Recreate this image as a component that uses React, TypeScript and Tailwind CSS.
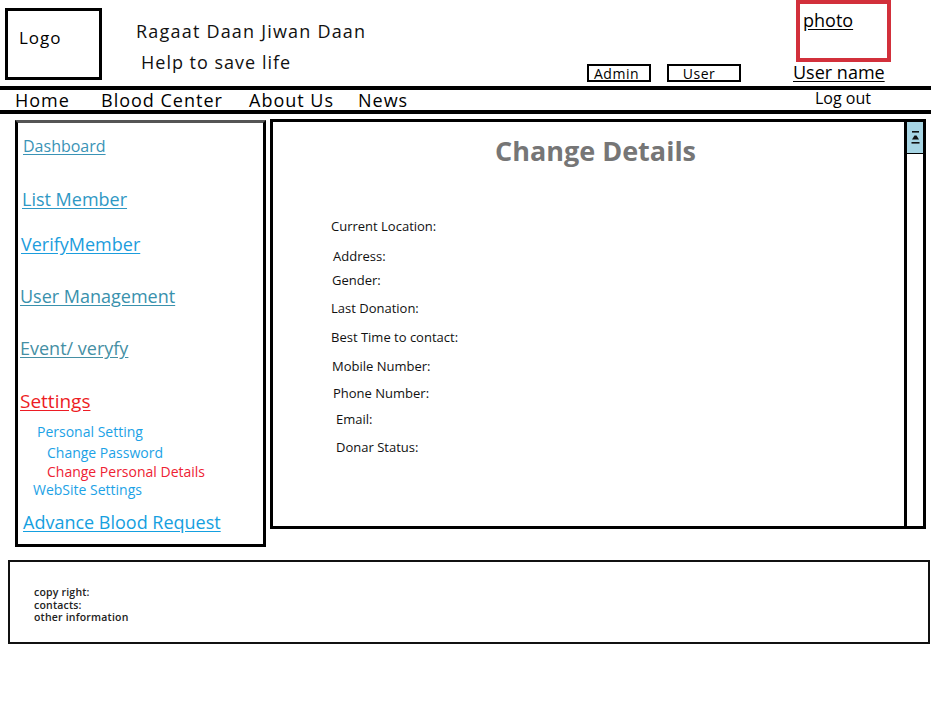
import React from "react";

const sideLinks: { label: string; cls: string }[] = [
  { label: "Dashboard", cls: "mt-[12px] ml-[5px] text-[16px] leading-[22px] text-[#3a93b6]" },
  { label: "List Member", cls: "mt-[30px] ml-[4px] text-[18px] leading-[24px] text-[#2f98c4]" },
  { label: "VerifyMember", cls: "mt-[21px] ml-[3px] text-[18px] leading-[24px] text-[#1b9ddd]" },
  { label: "User Management", cls: "mt-[28px] ml-[2px] text-[18px] leading-[24px] text-[#3991ad]" },
  { label: "Event/ veryfy", cls: "mt-[28px] ml-[2px] text-[18px] leading-[24px] text-[#458fa4]" },
  { label: "Settings", cls: "mt-[28px] ml-[2px] text-[19px] leading-[26px] text-[#ed1c24]" },
];

const subLinks: { label: string; cls: string }[] = [
  { label: "Personal Setting", cls: "mt-[9px] ml-[19px] text-[#1ca2e6]" },
  { label: "Change Password", cls: "mt-[3px] ml-[29px] text-[#1ca2e6]" },
  { label: "Change Personal Details", cls: "mt-[1px] ml-[29px] text-[#ee2233]" },
  { label: "WebSite Settings", cls: "mt-[0px] ml-[15px] text-[#1ca2e6]" },
];

const fields: { label: string; cls: string }[] = [
  { label: "Current Location:", cls: "mt-[0px] ml-[0px]" },
  { label: "Address:", cls: "mt-[12px] ml-[2px]" },
  { label: "Gender:", cls: "mt-[6px] ml-[1px]" },
  { label: "Last Donation:", cls: "mt-[10px] ml-[0px]" },
  { label: "Best Time to contact:", cls: "mt-[11px] ml-[0px]" },
  { label: "Mobile Number:", cls: "mt-[11px] ml-[1px]" },
  { label: "Phone Number:", cls: "mt-[9px] ml-[2px]" },
  { label: "Email:", cls: "mt-[8px] ml-[5px]" },
  { label: "Donar Status:", cls: "mt-[10px] ml-[5px]" },
];

export default function App() {
  return (
    <div
      className="w-[931px] h-[702px] bg-white text-black overflow-hidden"
      style={{ fontFamily: '"Open Sans", "Noto Sans", sans-serif' }}
    >
      {/* Header */}
      <div className="flex items-start h-[86px]">
        <div className="ml-[5px] mt-[8px] w-[97px] h-[72px] border-[3px] border-black shrink-0">
          <div className="mt-[16px] ml-[11px] text-[17px] leading-[22px] tracking-[1px]">Logo</div>
        </div>
        <div className="ml-[34px] w-[451px] shrink-0">
          <div className="mt-[19px] text-[18px] leading-[24px] tracking-[1.2px] text-[#111]">
            Ragaat Daan Jiwan Daan
          </div>
          <div className="mt-[7px] ml-[5px] text-[18px] leading-[24px] tracking-[1px] text-[#111]">
            Help to save life
          </div>
        </div>
        <div className="mt-[64px] w-[64px] h-[18px] border-[2.5px] border-black shrink-0 flex items-center">
          <span className="ml-[5px] text-[14px] leading-[13px] tracking-[0.5px]">Admin</span>
        </div>
        <div className="ml-[16px] mt-[64px] w-[74px] h-[18px] border-[2.5px] border-black shrink-0 flex items-center justify-center">
          <span className="text-[14px] leading-[13px] tracking-[0.5px] -ml-[10px]">User</span>
        </div>
        <div className="ml-[52px] w-[100px] shrink-0">
          <div className="ml-[3px] w-[95px] h-[62px] border-[4px] border-[#d2303b]">
            <div className="mt-[4px] ml-[3px] text-[18px] leading-[24px] underline underline-offset-2">
              photo
            </div>
          </div>
          <div className="text-[18px] leading-[20px] underline underline-offset-2 whitespace-nowrap">
            User name
          </div>
        </div>
      </div>

      {/* Nav bar */}
      <div className="h-[28px] border-t-[4px] border-b-[4px] border-black flex items-center">
        <span className="ml-[15px] w-[86px] text-[18px] leading-[20px] tracking-[1px]">Home</span>
        <span className="w-[148px] text-[18px] leading-[20px] tracking-[1px]">Blood Center</span>
        <span className="w-[109px] text-[18px] leading-[20px] tracking-[1px]">About Us</span>
        <span className="w-[457px] text-[18px] leading-[20px] tracking-[1px]">News</span>
        <span className="text-[16px] leading-[20px] -mt-[4px]">Log out</span>
      </div>

      {/* Body */}
      <div className="flex items-start">
        {/* Sidebar */}
        <div className="ml-[15px] mt-[6px] w-[251px] h-[427px] border-[3px] border-black border-t-[#555] shrink-0 flex flex-col items-start">
          {sideLinks.map((l) => (
            <a key={l.label} className={`underline underline-offset-2 whitespace-nowrap ${l.cls}`}>
              {l.label}
            </a>
          ))}
          {subLinks.map((l) => (
            <span key={l.label} className={`text-[14px] leading-[18px] whitespace-nowrap ${l.cls}`}>
              {l.label}
            </span>
          ))}
          <a className="mt-[11px] ml-[5px] text-[18px] leading-[24px] text-[#15a0e0] underline underline-offset-2 whitespace-nowrap">
            Advance Blood Request
          </a>
        </div>

        {/* Main panel */}
        <div className="ml-[4px] mt-[5px] w-[656px] h-[410px] border-[3px] border-black shrink-0 flex">
          <div className="flex-1 flex flex-col">
            <h1 className="mt-[11px] pl-[14px] text-center text-[27px] leading-[36px] font-bold text-[#767676]">
              Change Details
            </h1>
            <div className="mt-[48px] ml-[58px] flex flex-col items-start">
              {fields.map((f) => (
                <span key={f.label} className={`text-[13px] leading-[18px] text-[#111] whitespace-nowrap ${f.cls}`}>
                  {f.label}
                </span>
              ))}
            </div>
          </div>
          <div className="w-[19px] border-l-[3px] border-black flex flex-col">
            <div className="h-[32px] bg-[#a7d5e4] border-b border-black flex items-center justify-center">
              <svg width="9" height="13" viewBox="0 0 9 13" fill="#111">
                <rect x="1" y="0" width="7" height="1.6" />
                <path d="M1 8.5 L3.5 4.5 L5.5 4.5 L8 8.5 Z" />
                <rect x="0.5" y="11" width="8" height="1.6" />
              </svg>
            </div>
          </div>
        </div>
      </div>

      {/* Footer */}
      <div className="ml-[8px] mt-[13px] w-[922px] h-[84px] border-2 border-[#111]">
        <div className="mt-[24px] ml-[24px] text-[10.5px] leading-[12.5px] text-[#222] font-semibold tracking-[0.2px]">
          <div>copy right:</div>
          <div>contacts:</div>
          <div>other information</div>
        </div>
      </div>
    </div>
  );
}
